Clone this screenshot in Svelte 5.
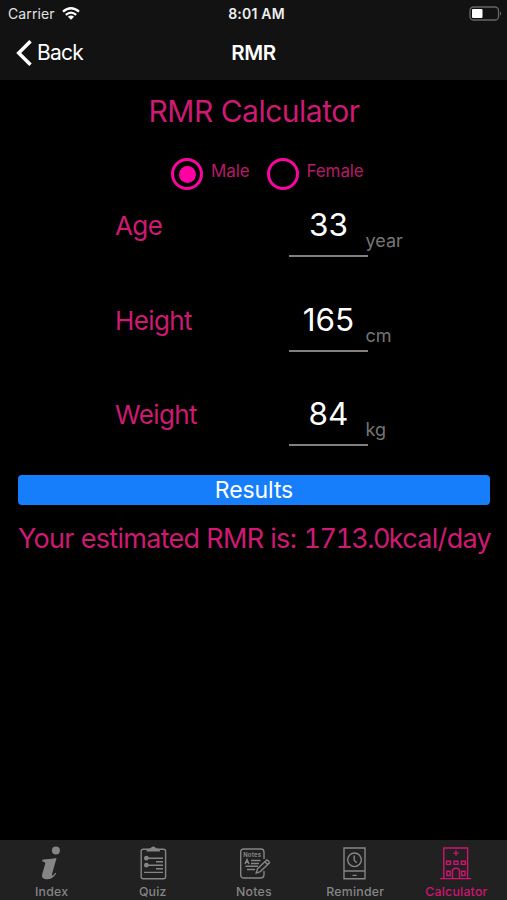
<script>
  let gender = "male";

  const genders = [
    { id: "male", label: "Male" },
    { id: "female", label: "Female" }
  ];

  let fields = [
    { label: "Age", value: 33, unit: "year" },
    { label: "Height", value: 165, unit: "cm" },
    { label: "Weight", value: 84, unit: "kg" }
  ];

  let result = "1713.0";
  let selectedTab = "Calculator";

  const tabs = ["Index", "Quiz", "Notes", "Reminder", "Calculator"];

  // Mifflin - St Jeor
  function calculate() {
    const [age, height, weight] = fields.map(f => Number(f.value));
    const offset = gender === "male" ? 5 : -161;
    result = (9.99 * weight + 6.25 * height - 4.92 * age + offset).toFixed(1);
  }
</script>

<style>
  :global(body) {
    background: #000000;
  }

  .screen {
    display: flex;
    flex-direction: column;
    width: 507px;
    height: 900px;
    background: #000000;
    color: #ffffff;
    font-family: Inter, "Liberation Sans", sans-serif;
  }

  svg {
    display: block;
  }

  header {
    height: 80px;
    background: #121212;
  }

  .status {
    display: grid;
    grid-template-columns: 1fr auto 1fr;
    align-items: center;
    height: 27px;
    padding: 0 5px 0 8px;
    font-size: 14px;
    line-height: 28px;
  }

  .carrier {
    display: flex;
    align-items: center;
    gap: 7px;
    color: #e2e2e2;
    letter-spacing: 0.1px;
  }

  .carrier svg {
    margin-bottom: 1px;
  }

  .time {
    padding-left: 3px;
    font-weight: 600;
    font-size: 14px;
    color: #eeeeee;
    letter-spacing: 0.2px;
  }

  .battery {
    justify-self: end;
    margin-bottom: 2px;
  }

  .nav {
    display: grid;
    grid-template-columns: 1fr auto 1fr;
    align-items: center;
    height: 51px;
    padding: 0 16px;
    line-height: 51px;
  }

  .back {
    display: flex;
    align-items: center;
    gap: 5px;
    font-size: 21px;
    letter-spacing: -0.8px;
  }

  .nav h1 {
    margin: 0;
    font-size: 20.5px;
    font-weight: 600;
    letter-spacing: -0.4px;
  }

  main {
    flex: 1;
    padding: 0 17px 0 18px;
  }

  h2 {
    margin: 0;
    padding-top: 11px;
    font-size: 30px;
    font-weight: 400;
    line-height: 40px;
    text-align: center;
    color: #ce1a73;
    letter-spacing: -0.5px;
  }

  .genders {
    display: flex;
    gap: 17px;
    height: 32px;
    margin: 27px 0 0 153px;
  }

  .gender {
    display: flex;
    gap: 8px;
    padding: 0;
    border: 0;
    background: none;
    color: #b81a69;
    font: inherit;
    font-size: 17px;
    line-height: 27px;
    letter-spacing: -0.1px;
  }

  .radio {
    display: flex;
    align-items: center;
    justify-content: center;
    box-sizing: border-box;
    width: 32px;
    height: 32px;
    border: 3px solid #fa05a0;
    border-radius: 50%;
  }

  .dot {
    width: 17px;
    height: 17px;
    border-radius: 50%;
    background: #ff00a2;
  }

  .fields {
    height: 285px;
  }

  .field {
    display: flex;
    height: 94.7px;
    padding-left: 97px;
  }

  .field label {
    width: 174px;
    padding-top: 16px;
    font-size: 26px;
    font-weight: 400;
    line-height: 39px;
    letter-spacing: -0.6px;
    color: #ce1a73;
  }

  .field input {
    box-sizing: border-box;
    width: 79px;
    height: 51px;
    margin-top: 16px;
    padding: 0 0 12px;
    border: 0;
    border-bottom: 2px solid #808080;
    outline: none;
    background: none;
    color: #ffffff;
    font: inherit;
    font-size: 31.5px;
    text-align: center;
  }

  .unit {
    margin: 38px 0 0 -2.5px;
    font-size: 18px;
    line-height: 25px;
    color: #757575;
  }

  .results {
    display: block;
    width: 472px;
    height: 30px;
    padding: 0;
    border: 0;
    border-radius: 4px;
    background: #167efb;
    color: #ffffff;
    font: inherit;
    font-size: 23px;
    line-height: 30px;
    letter-spacing: -0.1px;
  }

  .estimate {
    margin: 15px 0 0;
    font-size: 27px;
    font-weight: 400;
    line-height: 37px;
    letter-spacing: -0.7px;
    text-align: center;
    white-space: nowrap;
    color: #ce1a73;
  }

  .amount {
    font-variant-numeric: tabular-nums;
    letter-spacing: -1.6px;
  }

  .tabs {
    display: flex;
    height: 60px;
    padding-left: 1px;
    background: #212121;
  }

  .tab {
    display: flex;
    flex: 1;
    flex-direction: column;
    align-items: center;
    padding: 6px 0 0;
    border: 0;
    background: none;
    color: #858585;
    font: inherit;
    font-size: 12.3px;
    font-weight: 500;
    line-height: 18px;
    letter-spacing: 0.25px;
  }

  .tab svg {
    flex: none;
    margin-bottom: 3px;
    fill: none;
    stroke: currentColor;
    stroke-width: 1.4;
  }

  .tab.active {
    color: #cf1470;
  }

  .solid {
    fill: currentColor;
    stroke: none;
  }

  .note-title {
    font-size: 6px;
    font-weight: 700;
  }
</style>

<div class="screen">
  <header>
    <div class="status">
      <div class="carrier">
        <span>Carrier</span>
        <svg width="18" height="13" viewBox="0 0 18 13" fill="none" stroke="#fff" stroke-width="2.2">
          <path d="M1 4.7Q9-2.2 17 4.7M3.8 7.8Q9 3.4 14.2 7.8" />
          <path d="M5.9 9.7Q9 7.3 12.1 9.7L9 12.8z" fill="#fff" stroke="none" />
        </svg>
      </div>
      <div class="time">8:01 AM</div>
      <svg class="battery" width="33" height="15" viewBox="0 0 33 15">
        <rect x="1" y="1" width="28.5" height="13" rx="3.5" fill="none" stroke="#666" stroke-width="1.3" />
        <rect x="3" y="3" width="10.5" height="9" rx="1" fill="#fff" />
        <path d="M31 5.2Q33 7.5 31 9.8z" fill="#777" />
      </svg>
    </div>
    <div class="nav">
      <div class="back">
        <svg width="16" height="26" viewBox="0 0 16 26" fill="none" stroke="#fff" stroke-width="3.5">
          <path d="M14.5 1.2L2.7 13l11.8 11.8" />
        </svg>
        <span>Back</span>
      </div>
      <h1>RMR</h1>
    </div>
  </header>

  <main>
    <h2>RMR Calculator</h2>
    <div class="genders">
      {#each genders as g}
        <button class="gender" on:click={() => (gender = g.id)}>
          <span class="radio">
            {#if gender === g.id}<span class="dot"></span>{/if}
          </span>
          <span>{g.label}</span>
        </button>
      {/each}
    </div>
    <div class="fields">
      {#each fields as field}
        <div class="field">
          <label for={field.label}>{field.label}</label>
          <input id={field.label} bind:value={field.value} />
          <span class="unit">{field.unit}</span>
        </div>
      {/each}
    </div>
    <button class="results" on:click={calculate}>Results</button>
    <p class="estimate">Your estimated RMR is: <span class="amount">{result}</span>kcal/day</p>
  </main>

  <nav class="tabs">
    {#each tabs as tab}
      <button class="tab" class:active={tab === selectedTab} on:click={() => (selectedTab = tab)}>
        <svg width="34" height="34" viewBox="0 0 34 34">
          {#if tab === "Index"}
            <circle class="solid" cx="20.9" cy="4.4" r="4" />
            <path
              class="solid"
              d="M7.6 13.4Q15 13.2 21.6 12L17.2 27.6Q16.6 30 17.8 29.6Q18.8 29 20.2 26.8L21.3 27.5Q16.8 34 11 33.3Q5.8 32.4 7.2 28L10.2 17.8Q10.6 15.6 7.2 15.4z" />
          {:else if tab === "Quiz"}
            <rect x="5.2" y="3.2" width="24.4" height="29.5" rx="2" />
            <path class="solid" d="M10.5 5.4Q10.5 2.7 14.2 2.4Q17.3-1.2 20.4 2.4Q24 2.7 24.2 5.4z" />
            <circle class="solid" cx="10.4" cy="12.2" r="2.4" />
            <circle class="solid" cx="10.4" cy="19.2" r="2.4" />
            <path d="M12 12.2H27M20 15.8H27M12 19.2H27M20 22.7H27M8 26.4H27" />
          {:else if tab === "Notes"}
            <path d="M27 13V6.5Q27 3 24 3H7Q3.7 3 3.7 6V29Q3.7 32 7 32H23.5Q27 32 27 28.5V25" />
            <text class="solid note-title" x="6.2" y="10.5" textLength="18" lengthAdjust="spacingAndGlyphs">Notes</text>
            <path d="M8 18L10 13.5L12 18M8.8 16.3H11.3M14 14.5H23.5M14 17.5H22M8.5 20.3H21M10 23.5H18" />
            <path d="M20.5 22.8L29.7 14Q31.8 14.4 32.5 16.7L23.3 25.6L19.2 27.2zM27.8 15.8L30.7 18.6" />
          {:else if tab === "Reminder"}
            <path d="M6 2H27V32.8H6zM6 25H27M14.5 29.4H18.7" />
            <circle cx="16.5" cy="13.8" r="6.8" />
            <path d="M16.2 9.4V14.2L18.7 16.8" />
          {:else}
            <path d="M1.2 32.6H32.2M4.8 32.6V2H28.6V32.6M17 4.5V9.8M14.3 7.1H19.7" />
            <path d="M7.5 15.2H11.5V18.4H7.5zM15 15.2H19V18.4H15zM22.3 15.2H26.3V18.4H22.3zM7.8 25.2H11.2V29.5H7.8zM22.6 25.2H26V29.5H22.6z" />
            <path d="M13.5 32.6V25Q13.5 22.2 17 22.2Q20.5 22.2 20.5 25V32.6" />
          {/if}
        </svg>
        <span>{tab}</span>
      </button>
    {/each}
  </nav>
</div>
